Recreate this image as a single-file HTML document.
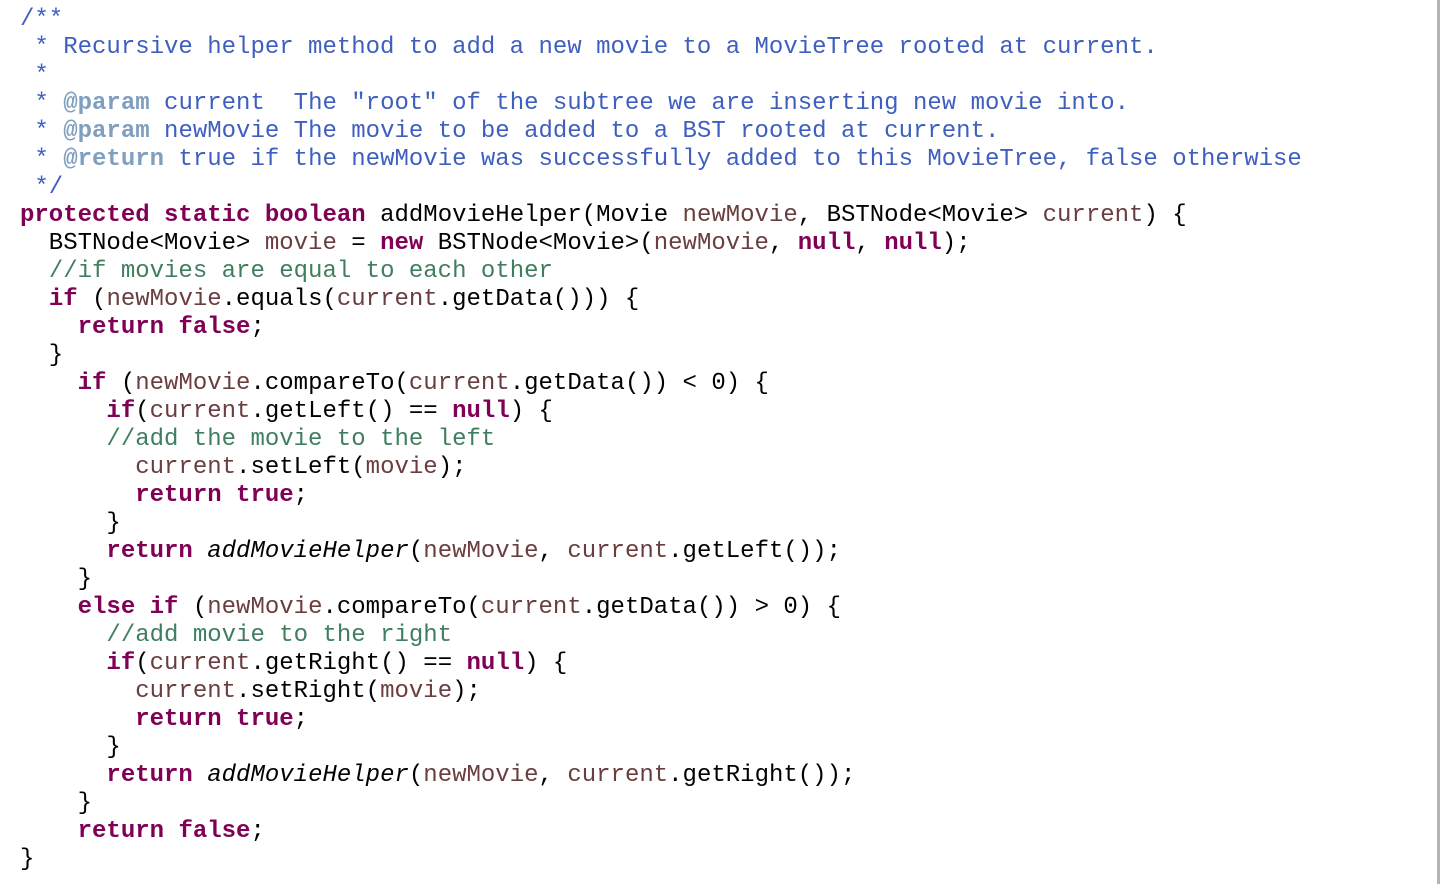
<!DOCTYPE html>
<html><head><meta charset="utf-8"><style>
html,body{margin:0;padding:0;background:#fff;width:1442px;height:884px;overflow:hidden;position:relative}
pre{margin:0;position:absolute;left:20px;top:6px;font-family:"Liberation Mono",monospace;font-size:24px;line-height:28px;color:#000}
.d{color:#3f5fbf}.t{color:#7f9fbf;font-weight:bold}.k{color:#7f0055;font-weight:bold}.v{color:#6a3e3e}.c{color:#3f7f5f}.i{font-style:italic}
.bar{position:absolute;left:1437px;top:0;width:3px;height:884px;background:#b4b4b4}
</style></head><body><div class="bar"></div><pre><span class="d">/**
 * Recursive helper method to add a new movie to a MovieTree rooted at current.
 *
 * <span class="t">@param</span> current  The "root" of the subtree we are inserting new movie into.
 * <span class="t">@param</span> newMovie The movie to be added to a BST rooted at current.
 * <span class="t">@return</span> true if the newMovie was successfully added to this MovieTree, false otherwise
 */</span>
<span class="k">protected</span> <span class="k">static</span> <span class="k">boolean</span> addMovieHelper(Movie <span class="v">newMovie</span>, BSTNode&lt;Movie&gt; <span class="v">current</span>) {
  BSTNode&lt;Movie&gt; <span class="v">movie</span> = <span class="k">new</span> BSTNode&lt;Movie&gt;(<span class="v">newMovie</span>, <span class="k">null</span>, <span class="k">null</span>);
  <span class="c">//if movies are equal to each other</span>
  <span class="k">if</span> (<span class="v">newMovie</span>.equals(<span class="v">current</span>.getData())) {
    <span class="k">return</span> <span class="k">false</span>;
  }
    <span class="k">if</span> (<span class="v">newMovie</span>.compareTo(<span class="v">current</span>.getData()) &lt; 0) {
      <span class="k">if</span>(<span class="v">current</span>.getLeft() == <span class="k">null</span>) {
      <span class="c">//add the movie to the left</span>
        <span class="v">current</span>.setLeft(<span class="v">movie</span>);
        <span class="k">return</span> <span class="k">true</span>;
      }
      <span class="k">return</span> <span class="i">addMovieHelper</span>(<span class="v">newMovie</span>, <span class="v">current</span>.getLeft());
    }
    <span class="k">else</span> <span class="k">if</span> (<span class="v">newMovie</span>.compareTo(<span class="v">current</span>.getData()) &gt; 0) {
      <span class="c">//add movie to the right</span>
      <span class="k">if</span>(<span class="v">current</span>.getRight() == <span class="k">null</span>) {
        <span class="v">current</span>.setRight(<span class="v">movie</span>);
        <span class="k">return</span> <span class="k">true</span>;
      }
      <span class="k">return</span> <span class="i">addMovieHelper</span>(<span class="v">newMovie</span>, <span class="v">current</span>.getRight());
    }
    <span class="k">return</span> <span class="k">false</span>;
}</pre></body></html>
